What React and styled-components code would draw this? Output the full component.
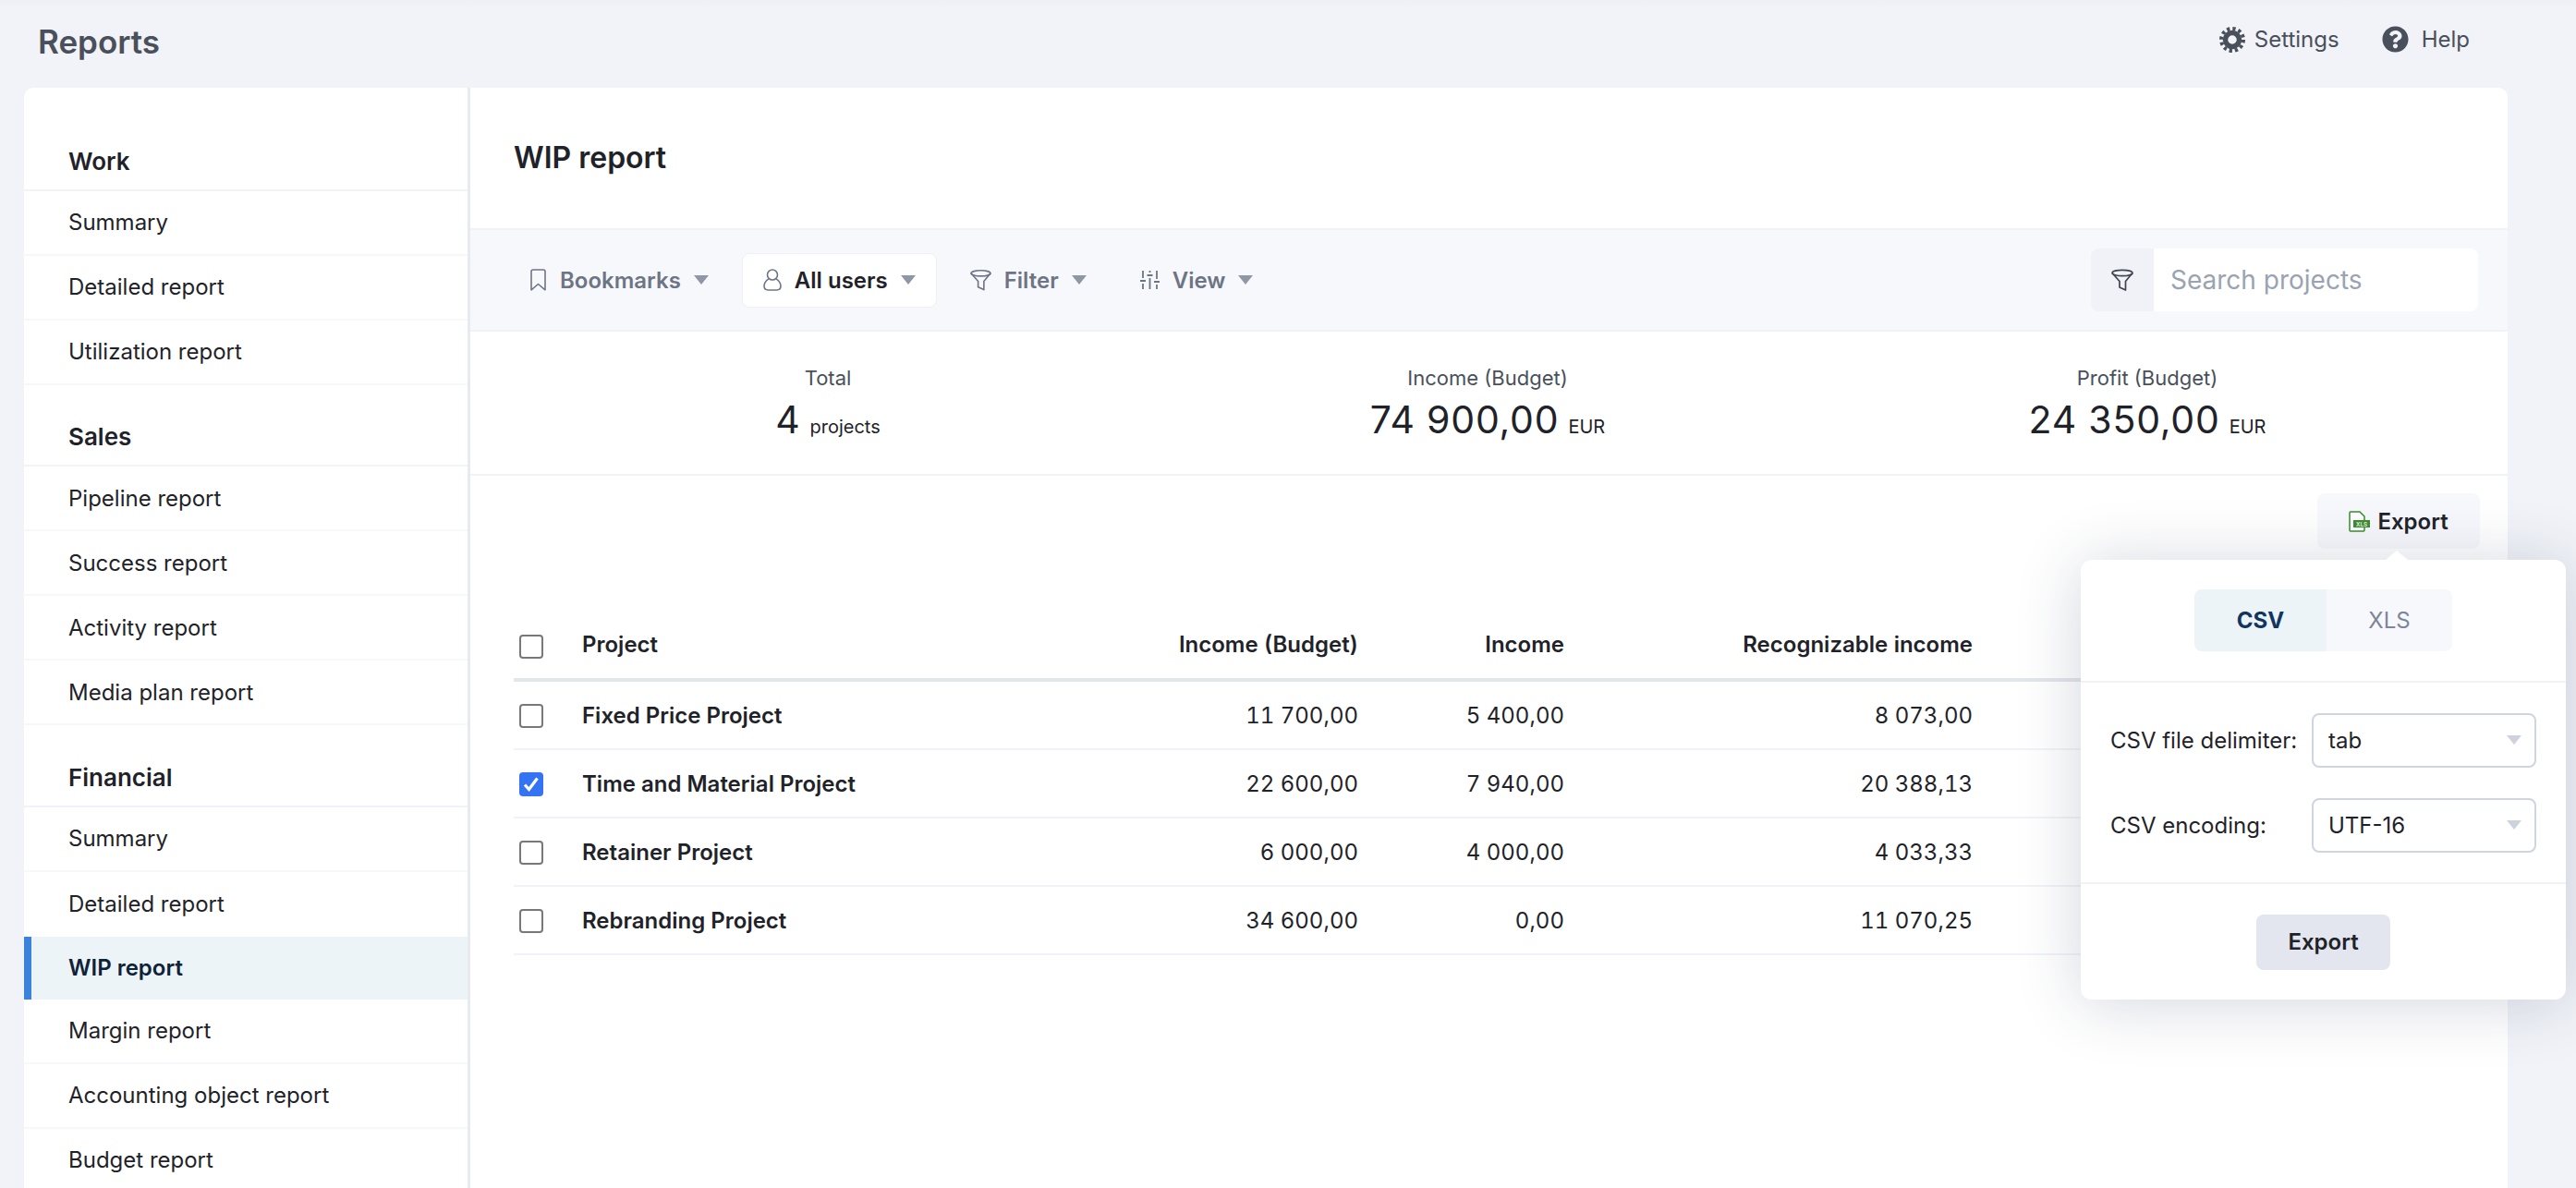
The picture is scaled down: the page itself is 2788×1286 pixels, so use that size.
import React from "react";
import styled, { createGlobalStyle } from "styled-components";
import { FaQuestionCircle } from "react-icons/fa";

const GlobalStyle = createGlobalStyle`
  * { box-sizing: border-box; }
  html, body { margin: 0; padding: 0; }
  body {
    font-family: Inter, "Liberation Sans", sans-serif;
    color: #1f2329;
    background: #f1f3f8;
  }
`;

const Page = styled.div`
  height: 1286px;
  overflow: hidden;
  display: flex;
  flex-direction: column;
  background: linear-gradient(#eef0f5 0, #f1f3f8 10px);
`;

const TopBar = styled.header`
  height: 95px;
  flex: none;
  padding: 0 115px 10px 41px;
  display: flex;
  align-items: center;
  justify-content: space-between;
`;

const AppTitle = styled.h1`
  margin: 5px 0 0;
  font-size: 35px;
  font-weight: 600;
  color: #4a505b;
`;

const TopActions = styled.nav`
  display: flex;
  align-items: center;
  gap: 46px;
`;

const TopAction = styled.a`
  display: flex;
  align-items: center;
  gap: ${(p) => p.$gap};
  font-size: 24px;
  color: #4a505b;
`;

const Card = styled.div`
  flex: 1;
  min-height: 0;
  margin: 0 74px 0 26px;
  display: flex;
  background: #fff;
  border-radius: 10px 10px 0 0;
`;

const Sidebar = styled.aside`
  width: 483px;
  flex: none;
  padding-top: 23px;
  border-right: 3px solid #e8eaf1;
`;

const SectionTitle = styled.h3`
  margin: 0;
  height: 88.5px;
  padding: 0 0 15px 48px;
  display: flex;
  align-items: flex-end;
  font-size: 26px;
  font-weight: 600;
  border-bottom: 2px solid #f2f3f8;
`;

const NavItem = styled.a`
  height: ${(p) => (p.$active ? "68px" : "70px")};
  padding-left: ${(p) => (p.$active ? "40px" : "48px")};
  display: flex;
  align-items: center;
  font-size: 24px;
  font-weight: ${(p) => (p.$active ? 600 : 400)};
  color: ${(p) => (p.$active ? "#0f2238" : "#1f2329")};
  background: ${(p) => (p.$active ? "#edf4f8" : "transparent")};
  border-left: ${(p) => (p.$active ? "8px solid #3b82dc" : "none")};
  border-bottom: ${(p) => (p.$active || p.$plain ? "none" : "2px solid #f7f8fb")};
`;

const Main = styled.main`
  flex: 1;
  min-width: 0;
  display: flex;
  flex-direction: column;
`;

const MainHeader = styled.div`
  height: 152px;
  flex: none;
  padding: 0 0 2px 47px;
  display: flex;
  align-items: center;
`;

const ReportTitle = styled.h2`
  margin: 0;
  font-size: 32px;
  font-weight: 600;
`;

const Toolbar = styled.div`
  height: 112px;
  flex: none;
  padding: 0 32px 0 43px;
  display: flex;
  align-items: center;
  background: #f7f8fc;
  border-top: 2px solid #f0f2f7;
  border-bottom: 2px solid #f0f2f7;
`;

const ToolButton = styled.button`
  height: 59px;
  margin-right: 14px;
  padding: 0 ${(p) => (p.$active ? "22px" : "21px")} 0 ${(p) => (p.$active ? "22px" : "21px")};
  display: flex;
  align-items: center;
  gap: 14px;
  font-family: inherit;
  font-size: 24px;
  font-weight: 600;
  color: ${(p) => (p.$active ? "#1f2329" : "#6d7585")};
  background: ${(p) => (p.$active ? "#fff" : "transparent")};
  border: ${(p) => (p.$active ? "1px solid #eff1f6" : "1px solid transparent")};
  border-radius: 8px;
`;

const Caret = styled.span`
  width: 0;
  height: 0;
  border-left: 8px solid transparent;
  border-right: 8px solid transparent;
  border-top: 10px solid ${(p) => p.$color || "#8f97a6"};
`;

const Search = styled.div`
  width: 419px;
  height: 68px;
  margin-left: auto;
  display: flex;
  background: #fff;
  border-radius: 8px;
  overflow: hidden;
`;

const SearchIcon = styled.div`
  width: 68px;
  flex: none;
  display: flex;
  align-items: center;
  justify-content: center;
  background: #f0f2f7;
`;

const SearchInput = styled.input`
  flex: 1;
  min-width: 0;
  padding: 0 0 0 18px;
  border: none;
  outline: none;
  font-family: inherit;
  font-size: 28px;
  background: transparent;
  &::placeholder { color: #9aa3b2; opacity: 1; }
`;

const Stats = styled.section`
  height: 156px;
  flex: none;
  padding: 11px 33px 0 30px;
  display: grid;
  grid-template-columns: repeat(3, 1fr);
  align-items: center;
  border-bottom: 2px solid #f2f3f8;
`;

const Stat = styled.div`
  display: flex;
  flex-direction: column;
  align-items: center;
  gap: 6px;
`;

const StatLabel = styled.div`
  font-size: 22px;
  color: #4a505b;
`;

const StatValue = styled.div`
  display: flex;
  align-items: baseline;
  gap: 10px;
  font-size: 41px;
  letter-spacing: 0.8px;
  line-height: 52px;
`;

const StatUnit = styled.span`
  font-size: 20px;
  letter-spacing: 0;
`;

const ExportRow = styled.div`
  flex: none;
  padding: 19px 30px 0 0;
  display: flex;
  justify-content: flex-end;
`;

const ExportAnchor = styled.div`
  position: relative;
`;

const ExportButton = styled.button`
  width: 176px;
  height: 60px;
  display: flex;
  align-items: center;
  justify-content: center;
  gap: 8px;
  font-family: inherit;
  font-size: 24px;
  font-weight: 600;
  color: #1f2329;
  background: #f7f8fc;
  border: none;
  border-radius: 8px;
`;

const Popup = styled.div`
  position: absolute;
  top: 72px;
  right: -93px;
  width: 525px;
  height: 476px;
  z-index: 5;
  display: flex;
  flex-direction: column;
  background: #fff;
  border-radius: 12px;
  box-shadow: 0 4px 70px rgba(40, 50, 90, 0.2);
  &::before {
    content: "";
    position: absolute;
    top: -10px;
    left: 330px;
    border-left: 12px solid transparent;
    border-right: 12px solid transparent;
    border-bottom: 10px solid #fff;
  }
`;

const PopupTabs = styled.div`
  height: 133px;
  flex: none;
  display: flex;
  justify-content: center;
  align-items: center;
  border-bottom: 2px solid #f2f3f8;
`;

const PopupTab = styled.div`
  width: ${(p) => (p.$active ? "143px" : "136px")};
  height: 67px;
  display: flex;
  align-items: center;
  justify-content: center;
  font-size: 24px;
  font-weight: ${(p) => (p.$active ? 700 : 400)};
  color: ${(p) => (p.$active ? "#123560" : "#7d8597")};
  background: ${(p) => (p.$active ? "#edf4f8" : "#f7f8fc")};
  border-radius: ${(p) => (p.$active ? "8px 0 0 8px" : "0 8px 8px 0")};
`;

const PopupFields = styled.div`
  height: 218px;
  flex: none;
  padding: 0 32px;
  display: flex;
  flex-direction: column;
  justify-content: center;
  gap: 33px;
  border-bottom: 2px solid #f2f3f8;
`;

const Field = styled.div`
  display: flex;
  align-items: center;
  justify-content: space-between;
  font-size: 24px;
`;

const SelectBox = styled.div`
  width: 243px;
  height: 59px;
  padding: 0 14px 0 16px;
  display: flex;
  align-items: center;
  justify-content: space-between;
  border: 2px solid #d0d4e0;
  border-radius: 8px;
  font-size: 24px;
`;

const PopupFooter = styled.div`
  flex: 1;
  display: flex;
  align-items: center;
  justify-content: center;
`;

const SubmitButton = styled.button`
  width: 145px;
  height: 60px;
  font-family: inherit;
  font-size: 24px;
  font-weight: 600;
  color: #1f2329;
  background: #e3e6ee;
  border: none;
  border-radius: 8px;
`;

const Table = styled.div`
  margin: 66px 30px 0 47px;
`;

const Row = styled.div`
  height: ${(p) => (p.$head ? "78px" : "74px")};
  display: grid;
  grid-template-columns: 74px 451px 389px 223px 442px 1fr;
  align-items: center;
  font-size: 24px;
  font-weight: ${(p) => (p.$head ? 600 : 400)};
  border-bottom: ${(p) => (p.$head ? "4px solid #e3e6ea" : "2px solid #f2f3f8")};
`;

const ProjectName = styled.div`
  font-weight: 600;
`;

const NumberCell = styled.div`
  text-align: right;
  font-variant-numeric: tabular-nums;
`;

const CheckBox = styled.div`
  width: 26px;
  height: 26px;
  margin: ${(p) => (p.$head ? "5px" : "2px")} 0 0 6px;
  display: flex;
  align-items: center;
  justify-content: center;
  background: ${(p) => (p.$checked ? "#3474f4" : "#fff")};
  border: ${(p) => (p.$checked ? "none" : "2px solid #787878")};
  border-radius: 4px;
`;

const BookmarkIcon = () => (
  <svg width="18" height="24" viewBox="0 0 18 24" fill="none" stroke="#6d7585" strokeWidth="1.6">
    <path d="M1 22.8V3a2 2 0 0 1 2-2h11a2 2 0 0 1 2 2v19.8l-7.5-6.3z" strokeLinejoin="round" />
  </svg>
);

const UserIcon = () => (
  <svg width="20" height="24" viewBox="0 0 20 24" fill="none" stroke="#6d7585" strokeWidth="1.6">
    <circle cx="10" cy="6.5" r="5.5" />
    <path d="M6 10.8C3 12.8 1 16 1 18.6 1 21.3 3 23 5.5 23h9c2.500 0 4.500-1.700 4.500-4.400 0-2.600-2-5.800-5-7.800" />
  </svg>
);

const FunnelIcon = ({ color = "#6d7585", size = 24 }) => (
  <svg width={size} height="24" viewBox="0 0 24 24" fill="none" stroke={color} strokeWidth="1.7" strokeLinejoin="round">
    <ellipse cx="12" cy="4.500" rx="11" ry="3.200" />
    <path d="M1 4.500 9 13.500V20l6.500 3V13.500L23 4.500" />
  </svg>
);

const SlidersIcon = () => (
  <svg width="21" height="20" viewBox="0 0 21 20" fill="none" stroke="#6d7585" strokeWidth="1.800">
    <path d="M3 0v8M0 11h6M3 14v6M10.500 0v2M7.500 5h6M10.500 8v12M18 0v9M15 12h6M18 15v5" />
  </svg>
);

const GearIcon = () => (
  <svg width="28" height="28" viewBox="0 0 28 28" fill="none" stroke="#4a505b">
    <circle cx="14" cy="14" r="7.500" strokeWidth="5.500" />
    <circle cx="14" cy="14" r="12" strokeWidth="4" strokeDasharray="3.280 3" />
  </svg>
);

const XlsIcon = () => (
  <svg width="23" height="23" viewBox="0 0 23 23">
    <path d="M1 2a1 1 0 0 1 1-1h10l5 5v15a1 1 0 0 1-1 1H2a1 1 0 0 1-1-1z" fill="#fff" stroke="#3d8c2f" strokeWidth="1.500" />
    <rect x="5" y="10" width="18" height="8" fill="#3d8c2f" />
    <text x="14" y="16.500" textAnchor="middle" fontSize="6.500" fontWeight="700" fill="#d8ecd2" fontFamily="Inter, sans-serif">XLS</text>
  </svg>
);

const CheckMark = () => (
  <svg width="18" height="16" viewBox="0 0 18 16" fill="none" stroke="#fff" strokeWidth="3.200">
    <path d="M2 8.500 6.500 13.500 15.500 1.500" />
  </svg>
);

const navSections = [
  { title: "Work", items: ["Summary", "Detailed report", "Utilization report"] },
  { title: "Sales", items: ["Pipeline report", "Success report", "Activity report", "Media plan report"] },
  {
    title: "Financial",
    items: ["Summary", "Detailed report", "WIP report", "Margin report", "Accounting object report", "Budget report"],
  },
];

const rows = [
  { name: "Fixed Price Project", budget: "11 700,00", income: "5 400,00", recognizable: "8 073,00" },
  { name: "Time and Material Project", budget: "22 600,00", income: "7 940,00", recognizable: "20 388,13", checked: true },
  { name: "Retainer Project", budget: "6 000,00", income: "4 000,00", recognizable: "4 033,33" },
  { name: "Rebranding Project", budget: "34 600,00", income: "0,00", recognizable: "11 070,25" },
];

const App = () => {
  return (
    <Page>
      <GlobalStyle />
      <TopBar>
        <AppTitle>Reports</AppTitle>
        <TopActions>
          <TopAction $gap="10px">
            <GearIcon />
            Settings
          </TopAction>
          <TopAction $gap="14px">
            <FaQuestionCircle size={29} color="#4a505b" />
            Help
          </TopAction>
        </TopActions>
      </TopBar>
      <Card>
        <Sidebar>
          {navSections.map((section) => (
            <div key={section.title}>
              <SectionTitle>{section.title}</SectionTitle>
              {section.items.map((item, i) => (
                <NavItem
                  key={item}
                  $active={item === "WIP report"}
                  $plain={section.items[i + 1] === "WIP report"}
                >
                  {item}
                </NavItem>
              ))}
            </div>
          ))}
        </Sidebar>
        <Main>
          <MainHeader>
            <ReportTitle>WIP report</ReportTitle>
          </MainHeader>
          <Toolbar>
            <ToolButton>
              <BookmarkIcon />
              Bookmarks
              <Caret />
            </ToolButton>
            <ToolButton $active>
              <UserIcon />
              All users
              <Caret />
            </ToolButton>
            <ToolButton>
              <FunnelIcon size={23} />
              Filter
              <Caret />
            </ToolButton>
            <ToolButton>
              <SlidersIcon />
              View
              <Caret />
            </ToolButton>
            <Search>
              <SearchIcon>
                <FunnelIcon color="#3f444e" />
              </SearchIcon>
              <SearchInput placeholder="Search projects" />
            </Search>
          </Toolbar>
          <Stats>
            <Stat>
              <StatLabel>Total</StatLabel>
              <StatValue>
                4 <StatUnit>projects</StatUnit>
              </StatValue>
            </Stat>
            <Stat>
              <StatLabel>Income (Budget)</StatLabel>
              <StatValue>
                74 900,00 <StatUnit>EUR</StatUnit>
              </StatValue>
            </Stat>
            <Stat>
              <StatLabel>Profit (Budget)</StatLabel>
              <StatValue>
                24 350,00 <StatUnit>EUR</StatUnit>
              </StatValue>
            </Stat>
          </Stats>
          <ExportRow>
            <ExportAnchor>
              <ExportButton>
                <XlsIcon />
                Export
              </ExportButton>
              <Popup>
                <PopupTabs>
                  <PopupTab $active>CSV</PopupTab>
                  <PopupTab>XLS</PopupTab>
                </PopupTabs>
                <PopupFields>
                  <Field>
                    CSV file delimiter:
                    <SelectBox>
                      tab
                      <Caret $color="#cdd2dd" />
                    </SelectBox>
                  </Field>
                  <Field>
                    CSV encoding:
                    <SelectBox>
                      UTF-16
                      <Caret $color="#cdd2dd" />
                    </SelectBox>
                  </Field>
                </PopupFields>
                <PopupFooter>
                  <SubmitButton>Export</SubmitButton>
                </PopupFooter>
              </Popup>
            </ExportAnchor>
          </ExportRow>
          <Table>
            <Row $head>
              <CheckBox $head />
              <div>Project</div>
              <NumberCell>Income (Budget)</NumberCell>
              <NumberCell>Income</NumberCell>
              <NumberCell>Recognizable income</NumberCell>
            </Row>
            {rows.map((row) => (
              <Row key={row.name}>
                <CheckBox $checked={row.checked}>{row.checked && <CheckMark />}</CheckBox>
                <ProjectName>{row.name}</ProjectName>
                <NumberCell>{row.budget}</NumberCell>
                <NumberCell>{row.income}</NumberCell>
                <NumberCell>{row.recognizable}</NumberCell>
              </Row>
            ))}
          </Table>
        </Main>
      </Card>
    </Page>
  );
};

export default App;
